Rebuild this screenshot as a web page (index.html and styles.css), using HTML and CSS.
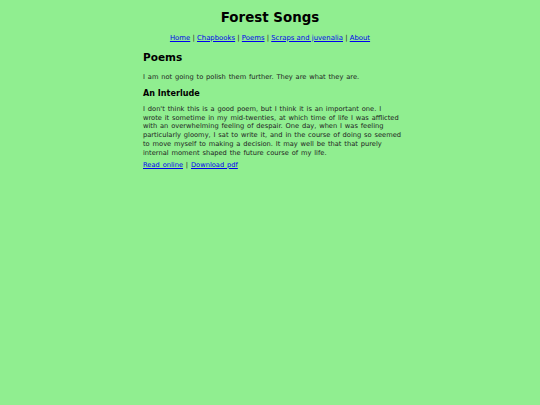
FILE: index.html
```html
<!DOCTYPE html>
<html>
<head>
<meta charset="utf-8">
<link rel="stylesheet" href="styles.css">
</head>
<body>
<div class="page">
  <h1 class="title">Forest Songs</h1>
  <nav class="nav">
    <a href="#">Home</a> | <a href="#">Chapbooks</a> | <a href="#">Poems</a> | <a href="#">Scraps and juvenalia</a> | <a href="#">About</a>
  </nav>
  <main class="content">
    <h2 class="section-title">Poems</h2>
    <p class="text intro">I am not going to polish them further. They are what they are.</p>
    <h3 class="poem-title">An Interlude</h3>
    <p class="text body">I don't think this is a good poem, but I think it is an important one. I wrote it sometime in my mid-twenties, at which time of life I was afflicted with an overwhelming feeling of despair. One day, when I was feeling particularly gloomy, I sat to write it, and in the course of doing so seemed to move myself to making a decision. It may well be that that purely internal moment shaped the future course of my life.</p>
    <p class="text links"><a href="#">Read online</a> | <a href="#">Download pdf</a></p>
  </main>
</div>
</body>
</html>
```
FILE: styles.css
```css
html, body {
  margin: 0;
  padding: 0;
  background: #90ee90;
}
body {
  font-family: "DejaVu Sans", Verdana, sans-serif;
  color: #222;
}
.page {
  padding-top: 10px;
}
.title {
  margin: 0;
  text-align: center;
  font-size: 13.4px;
  line-height: 16px;
  color: #000;
}
.nav {
  margin-top: 7.5px;
  text-align: center;
  font-size: 6.9px;
  line-height: 9px;
}
a {
  color: #0000ee;
}
.content {
  width: 254px;
  margin: 8px auto 0;
}
.section-title {
  margin: 0;
  font-size: 10.5px;
  line-height: 13px;
  color: #000;
}
.poem-title {
  margin: 6.6px 0 0;
  font-size: 8.1px;
  line-height: 10px;
  color: #000;
}
.text {
  margin: 0;
  font-size: 6.7px;
  line-height: 8.7px;
  word-spacing: 0.7px;
}
.intro {
  margin-top: 9.1px;
}
.body {
  margin-top: 7.1px;
  margin-right: -5.5px;
}
.links {
  margin-top: 3.3px;
}
```
